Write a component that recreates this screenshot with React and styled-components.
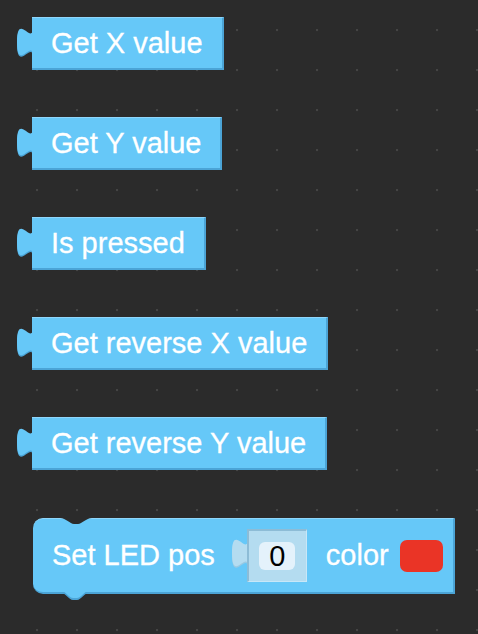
import React from "react";
import styled, { createGlobalStyle } from "styled-components";

const GlobalStyle = createGlobalStyle`
  html, body {
    margin: 0;
    padding: 0;
    background: #2b2b2b;
  }
  * {
    box-sizing: border-box;
  }
`;

const BLOCK = "#66c8f8";
const DARK = "#4ba4d6";
const LIGHT = "#8fd6fb";
const SHADOW_FILL = "#b4dcf0";

const Canvas = styled.div`
  width: 478px;
  height: 634px;
  overflow: hidden;
  background-color: #2b2b2b;
  background-image: radial-gradient(circle at 1px 1px, #444 1px, transparent 1.6px);
  background-size: 40px 40px;
  background-position: 36px 29px;
  padding: 17px 0 0 16px;
  display: flex;
  flex-direction: column;
  gap: 47px;
  font-family: "Liberation Sans", Arial, sans-serif;
`;

const Row = styled.div`
  display: flex;
  align-items: flex-start;
`;

const Body = styled.div`
  height: 53px;
  display: flex;
  align-items: center;
  padding: 0 19px 0 19px;
  background: ${BLOCK};
  border-top: 1px solid ${LIGHT};
  border-right: 2px solid ${DARK};
  border-bottom: 2px solid ${DARK};
  white-space: nowrap;
`;

const Label = styled.span`
  color: #fff;
  font-size: 29px;
  line-height: 1;
  -webkit-text-stroke: 0.3px #fff;
`;

const TabSvg = styled.svg`
  display: block;
  flex: none;
  overflow: visible;
  margin-right: -1px;
`;

const OutputTab = ({ fill = BLOCK, shade = DARK, top = 10, h = 53 }) => (
  <TabSvg width="17" height={h} viewBox={`0 0 17 ${h}`}>
    <path
      transform={`translate(0 ${top + 1.5})`}
      d="M17,0 C17,20 1,-16 1,15 C1,46 17,10 17,30 Z"
      fill={shade}
    />
    <path
      transform={`translate(0 ${top})`}
      d="M17,0 C17,20 1,-16 1,15 C1,46 17,10 17,30 Z"
      fill={fill}
    />
  </TabSvg>
);

const ValueBlock = ({ children }) => (
  <Row>
    <OutputTab />
    <Body>
      <Label>{children}</Label>
    </Body>
  </Row>
);

/* statement block */

const StatementRow = styled.div`
  display: flex;
  margin-top: 1px;
  padding-left: 17px;
`;

const StatementBody = styled.div`
  position: relative;
  height: 76px;
  display: flex;
  align-items: center;
  padding: 0 10px 0 19px;
  background: ${BLOCK};
  border-top: 1px solid ${LIGHT};
  border-right: 2px solid ${DARK};
  border-bottom: 2px solid ${DARK};
  border-radius: 10px 0 0 10px;
`;

const Notch = styled.svg`
  position: absolute;
  left: 27px;
  top: -1px;
  display: block;
`;

const NextTab = styled.svg`
  position: absolute;
  left: 26px;
  bottom: -10px;
  display: block;
`;

const Slot = styled.div`
  display: flex;
  align-items: flex-start;
  margin-left: 16px;
  margin-right: 19px;
`;

const SlotBox = styled.div`
  width: 60px;
  height: 53px;
  display: flex;
  align-items: center;
  justify-content: center;
  background: ${SHADOW_FILL};
  border-top: 2px solid #8dbcd6;
  border-left: 2px solid #8dbcd6;
  border-right: 1px solid #c8e7f7;
  border-bottom: 1px solid #c8e7f7;
`;

const Field = styled.div`
  width: 36px;
  height: 28px;
  border-radius: 6px;
  background: #e4f2fb;
  color: #000;
  font-size: 29px;
  line-height: 28px;
  text-align: center;
`;

const Swatch = styled.div`
  width: 43px;
  height: 32px;
  border-radius: 7px;
  background: ${(p) => p.$color};
  margin-left: 11px;
`;

const SetLedBlock = () => (
  <StatementRow>
    <StatementBody>
      <Notch width="32" height="8" viewBox="0 0 32 8">
        <path d="M0,0 C6,0 10,6 14,6 L18,6 C22,6 26,0 32,0 Z" fill="#2b2b2b" />
      </Notch>
      <NextTab width="32" height="10" viewBox="0 0 32 10">
        <path d="M0,0 C6,0 10,8 14,8 L18,8 C22,8 26,0 32,0 Z" fill={DARK} />
        <path d="M0,-2 C6,-2 10,6 14,6 L18,6 C22,6 26,-2 32,-2 Z" fill={BLOCK} />
      </NextTab>
      <Label>Set LED pos</Label>
      <Slot>
        <OutputTab fill={SHADOW_FILL} shade="#9ac9e2" top={9} h={53} />
        <SlotBox>
          <Field>0</Field>
        </SlotBox>
      </Slot>
      <Label>color</Label>
      <Swatch $color="#ea3426" />
    </StatementBody>
  </StatementRow>
);

export default function App() {
  return (
    <>
      <GlobalStyle />
      <Canvas>
        <ValueBlock>Get X value</ValueBlock>
        <ValueBlock>Get Y value</ValueBlock>
        <ValueBlock>Is pressed</ValueBlock>
        <ValueBlock>Get reverse X value</ValueBlock>
        <ValueBlock>Get reverse Y value</ValueBlock>
        <SetLedBlock />
      </Canvas>
    </>
  );
}
